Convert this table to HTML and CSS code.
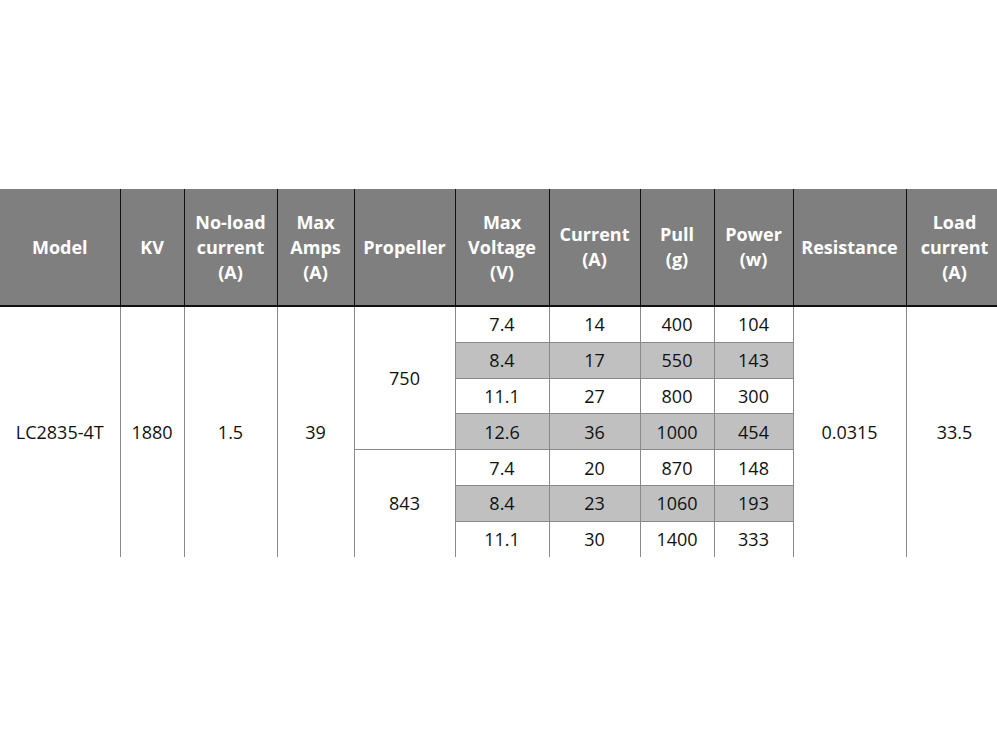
FILE: index.html
```html
<!DOCTYPE html>
<html>
<head>
<meta charset="utf-8">
<link rel="stylesheet" href="styles.css">
</head>
<body>
<div class="page">
<table class="spec">
  <colgroup>
    <col class="c1"><col class="c2"><col class="c3"><col class="c4"><col class="c5"><col class="c6"><col class="c7"><col class="c8"><col class="c9"><col class="c10"><col class="c11">
  </colgroup>
  <thead>
    <tr>
      <th>Model</th>
      <th>KV</th>
      <th>No-load<br>current<br>(A)</th>
      <th>Max<br>Amps<br>(A)</th>
      <th>Propeller</th>
      <th>Max<br>Voltage<br>(V)</th>
      <th>Current<br>(A)</th>
      <th>Pull<br>(g)</th>
      <th>Power<br>(w)</th>
      <th>Resistance</th>
      <th>Load<br>current<br>(A)</th>
    </tr>
  </thead>
  <tbody>
    <tr>
      <td rowspan="7">LC2835-4T</td>
      <td rowspan="7">1880</td>
      <td rowspan="7">1.5</td>
      <td rowspan="7">39</td>
      <td rowspan="4" class="prop">750</td>
      <td>7.4</td><td>14</td><td>400</td><td>104</td>
      <td rowspan="7">0.0315</td>
      <td rowspan="7">33.5</td>
    </tr>
    <tr class="alt"><td>8.4</td><td>17</td><td>550</td><td>143</td></tr>
    <tr><td>11.1</td><td>27</td><td>800</td><td>300</td></tr>
    <tr class="alt"><td>12.6</td><td>36</td><td>1000</td><td>454</td></tr>
    <tr><td rowspan="3" class="prop">843</td><td>7.4</td><td>20</td><td>870</td><td>148</td></tr>
    <tr class="alt"><td>8.4</td><td>23</td><td>1060</td><td>193</td></tr>
    <tr><td>11.1</td><td>30</td><td>1400</td><td>333</td></tr>
  </tbody>
</table>
</div>
</body>
</html>
```

FILE: styles.css
```css
html, body {
  margin: 0;
  padding: 0;
  background: #ffffff;
  overflow: hidden;
}

.page {
  width: 997px;
  height: 748px;
  padding-top: 189px;
  box-sizing: border-box;
  overflow: hidden;
}

.spec {
  border-collapse: collapse;
  table-layout: fixed;
  width: 1003px;
  font-family: "Open Sans", "Liberation Sans", sans-serif;
}

.c1 { width: 120px; }
.c2 { width: 64px; }
.c3 { width: 93px; }
.c4 { width: 77px; }
.c5 { width: 101px; }
.c6 { width: 94px; }
.c7 { width: 91px; }
.c8 { width: 74px; }
.c9 { width: 79px; }
.c10 { width: 113px; }
.c11 { width: 97px; }

.spec th {
  background: #807f80;
  color: #ffffff;
  font-weight: 700;
  font-size: 18px;
  line-height: 25px;
  height: 116px;
  padding: 0;
  text-align: center;
  vertical-align: middle;
  border-left: 1px solid #111111;
  border-right: 1px solid #111111;
  border-bottom: 2px solid #111111;
  border-top: none;
}

.spec thead th:first-child {
  border-left: none;
}

.spec td {
  color: #111111;
  font-size: 18px;
  line-height: 22px;
  height: 34.8px;
  padding: 0;
  text-align: center;
  vertical-align: middle;
  border: 1px solid #8a8a8a;
  background: #ffffff;
}

.spec tbody tr:first-child td {
  border-top: none;
}

.spec tbody tr:last-child td,
.spec td[rowspan="7"],
.spec td.prop[rowspan="3"] {
  border-bottom: none;
}

.spec tbody tr:first-child td:first-child {
  border-left: none;
}

.spec tr.alt td {
  background: #c0c0c0;
}
```
